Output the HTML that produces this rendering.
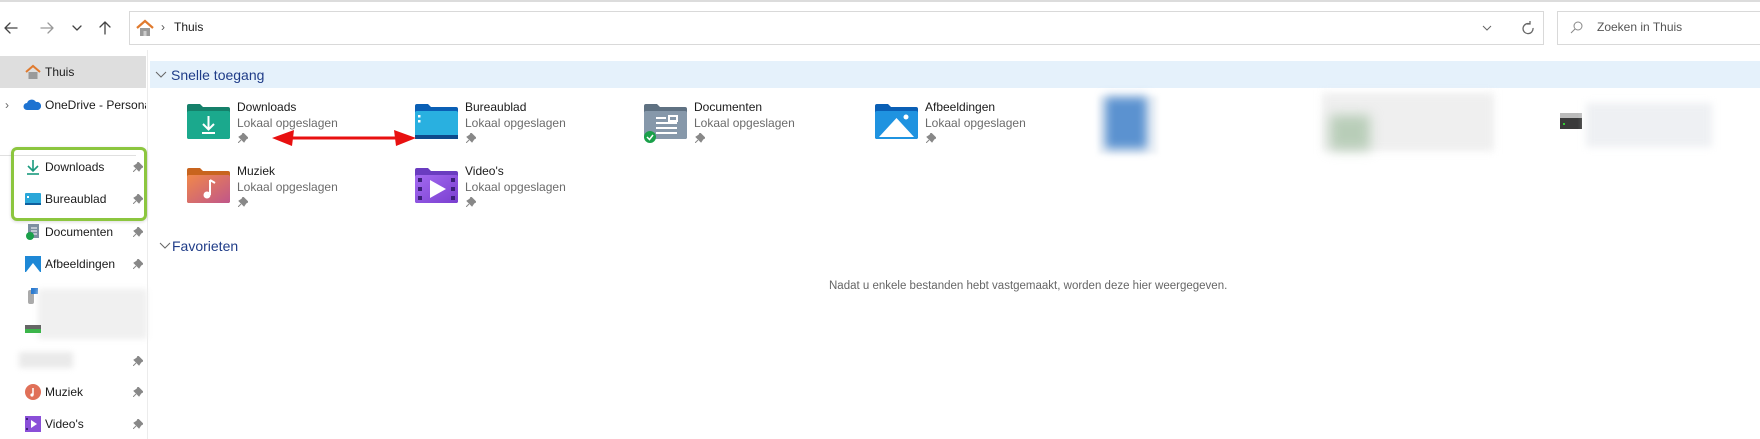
<!DOCTYPE html>
<html><head><meta charset="utf-8"><style>
*{margin:0;padding:0;box-sizing:border-box}
body{width:1760px;height:439px;background:#fff;font-family:"Liberation Sans",sans-serif;font-size:12px;color:#1a1a1a;position:relative;overflow:hidden}
.a{position:absolute}
.t{position:absolute;white-space:nowrap;line-height:14px}
.sub{color:#6b6b6b}
.pin{position:absolute;width:10px;height:10px}
</style></head><body>
<div class="a" style="left:0;top:0;width:1760px;height:2px;background:#dcdcdc"></div>
<!-- nav -->
<svg class="a" style="left:0;top:18px" width="120" height="20">
<g fill="none" stroke-width="1.3" stroke-linecap="round" stroke-linejoin="round">
<path d="M17 10H5M10 5L5 10L10 15" stroke="#444"/>
<path d="M41 10H53M48 5L53 10L48 15" stroke="#999"/>
<path d="M73 8L77 12L81 8" stroke="#444"/>
<path d="M105 16V4M100 9L105 4L110 9" stroke="#444"/>
</g></svg>
<!-- address -->
<div class="a" style="left:129px;top:11px;width:1415px;height:34px;border:1px solid #d9d9d9"></div>
<svg class="a" style="left:135px;top:19px" width="20" height="18"><path d="M2 9L10 2L18 9" fill="none" stroke="#e07a2e" stroke-width="2.2"/><rect x="5" y="9" width="10" height="8" fill="#9a9a9a"/><rect x="8.5" y="12" width="3" height="5" fill="#ccc"/></svg>
<div class="t" style="left:161px;top:20px;color:#555">›</div>
<div class="t" style="left:174px;top:20px">Thuis</div>
<svg class="a" style="left:1480px;top:20px" width="60" height="16"><path d="M3 6L7 10L11 6" fill="none" stroke="#666"/><path d="M50 4A5 5 0 1 0 53 8M50 1V4H47" fill="none" stroke="#666" stroke-width="1.3"/></svg>
<div class="a" style="left:1557px;top:11px;width:210px;height:34px;border:1px solid #d9d9d9"></div>
<svg class="a" style="left:1570px;top:20px" width="14" height="14"><circle cx="8" cy="6" r="4" fill="none" stroke="#888"/><path d="M5 9L1 13" stroke="#888"/></svg>
<div class="t" style="left:1597px;top:20px;color:#555">Zoeken in Thuis</div>
<!-- sidebar -->
<div class="a" style="left:0;top:56px;width:146px;height:32px;background:#dedede"></div>
<div class="a" style="left:147px;top:50px;width:1px;height:389px;background:#ececec"></div>
<svg class="a" style="left:25px;top:64px" width="16" height="16"><path d="M1 8L8 2L15 8" fill="none" stroke="#e07a2e" stroke-width="2"/><rect x="3.5" y="8" width="9" height="7" fill="#9a9a9a"/></svg>
<div class="t" style="left:45px;top:65px">Thuis</div>
<div class="t" style="left:5px;top:98px;color:#666">›</div>
<svg class="a" style="left:23px;top:98px" width="18" height="14"><path d="M4 12A3.5 3.5 0 0 1 4 5A5 5 0 0 1 13 4A4 4 0 0 1 15 12Z" fill="#1e73d1"/></svg>
<div class="t" style="left:45px;top:98px;width:101px;overflow:hidden">OneDrive - Persona</div>
<div class="a" style="left:0;top:155px;width:136px;height:1px;background:#e0e0e0"></div>
<div class="a" style="left:11px;top:147px;width:136px;height:74px;border:3px solid #8cc63f;border-radius:6px;box-shadow:0 1px 3px rgba(0,0,0,.15)"></div>
<!-- sidebar items -->
<svg class="a" style="left:25px;top:159px" width="16" height="16"><path d="M8 1V11M3 7L8 12L13 7" fill="none" stroke="#1a9a7e" stroke-width="1.6"/><path d="M2 15H14" stroke="#1a9a7e" stroke-width="1.6"/></svg>
<div class="t" style="left:45px;top:160px">Downloads</div>
<svg class="a" style="left:25px;top:192px" width="16" height="14"><rect x="0" y="1" width="16" height="12" rx="1" fill="#2aa7d9"/><rect x="0" y="11" width="16" height="2" fill="#0f5f9e"/><rect x="2" y="4" width="2" height="2" fill="#fff"/></svg>
<div class="t" style="left:45px;top:192px">Bureaublad</div>
<svg class="a" style="left:25px;top:223px" width="16" height="18"><rect x="3" y="1" width="11" height="14" fill="#7d8fa0"/><path d="M6 5H12M6 8H12M6 11H12" stroke="#fff"/><circle cx="5" cy="13" r="4" fill="#1aa04a"/></svg>
<div class="t" style="left:45px;top:225px">Documenten</div>
<svg class="a" style="left:25px;top:256px" width="16" height="16"><rect width="16" height="16" fill="#1e88d6"/><path d="M1 16L8 7L15 16Z" fill="#fff"/></svg>
<div class="t" style="left:45px;top:257px">Afbeeldingen</div>
<svg class="a" style="left:25px;top:288px" width="14" height="16"><rect x="3" y="2" width="6" height="14" rx="2" fill="#aaa"/><rect x="6" y="0" width="7" height="6" fill="#2a7ad0"/></svg>
<div class="a" style="left:38px;top:289px;width:109px;height:50px;background:#f0f0f0;filter:blur(3px)"></div>
<svg class="a" style="left:25px;top:325px" width="16" height="10"><rect y="0" width="16" height="4" fill="#666"/><rect y="4" width="16" height="4" fill="#3bb54a"/></svg>
<div class="a" style="left:19px;top:352px;width:54px;height:16px;background:#eaeaea;filter:blur(3px)"></div>
<svg class="a" style="left:25px;top:384px" width="16" height="16"><circle cx="8" cy="8" r="8" fill="#e07058"/><path d="M8 4V11" stroke="#fff" stroke-width="1.5"/><circle cx="7" cy="11" r="1.6" fill="#fff"/></svg>
<div class="t" style="left:45px;top:385px">Muziek</div>
<svg class="a" style="left:25px;top:416px" width="16" height="16"><rect width="16" height="16" fill="#8a4fd8"/><path d="M6 4L12 8L6 12Z" fill="#fff"/><rect x="1" y="2" width="2" height="2" fill="#3b1f7a"/><rect x="1" y="12" width="2" height="2" fill="#3b1f7a"/></svg>
<div class="t" style="left:45px;top:417px">Video's</div>
<!-- pins -->
<svg width="0" height="0" style="position:absolute"><defs><g id="p"><path d="M5 0L10 5L8 6L6 9L1 4L4 2Z M3 7L0 10" fill="#888" stroke="#888" stroke-width="1"/></g></defs></svg>
<svg class="pin" style="left:133px;top:162px"><use href="#p"/></svg>
<svg class="pin" style="left:133px;top:194px"><use href="#p"/></svg>
<svg class="pin" style="left:133px;top:227px"><use href="#p"/></svg>
<svg class="pin" style="left:133px;top:259px"><use href="#p"/></svg>
<svg class="pin" style="left:133px;top:356px"><use href="#p"/></svg>
<svg class="pin" style="left:133px;top:387px"><use href="#p"/></svg>
<svg class="pin" style="left:133px;top:419px"><use href="#p"/></svg>
<!-- content header -->
<div class="a" style="left:150px;top:61px;width:1610px;height:27px;background:#e5f1fb"></div>
<svg class="a" style="left:155px;top:70px" width="12" height="10"><path d="M1 2L6 7L11 2" fill="none" stroke="#666"/></svg>
<div class="t" style="left:171px;top:67px;font-size:14px;line-height:16px;color:#1f3c88">Snelle toegang</div>
<!-- tiles -->
<svg class="a" style="left:187px;top:104px" width="43" height="35"><path d="M0 2Q0 0 2 0H13L16 3H41Q43 3 43 5V33Q43 35 41 35H2Q0 35 0 33Z" fill="#15806a"/><rect x="0" y="7" width="43" height="28" rx="2" fill="#1ba98d"/><path d="M21.5 12V25M16 20L21.5 25.5L27 20M15 29H28" fill="none" stroke="#fff" stroke-width="2"/></svg>
<div class="t" style="left:237px;top:100px">Downloads</div>
<div class="t sub" style="left:237px;top:116px">Lokaal opgeslagen</div>
<svg class="pin" style="left:238px;top:133px"><use href="#p"/></svg>
<svg class="a" style="left:415px;top:104px" width="43" height="35"><path d="M0 2Q0 0 2 0H13L16 3H41Q43 3 43 5V33Q43 35 41 35H2Q0 35 0 33Z" fill="#0a5fb5"/><rect x="0" y="7" width="43" height="28" rx="2" fill="#29b0e0"/><rect x="0" y="31" width="43" height="4" fill="#0d4a8c"/><rect x="3" y="11" width="2.5" height="2.5" fill="#fff"/><rect x="3" y="16" width="2.5" height="2.5" fill="#fff"/></svg>
<div class="t" style="left:465px;top:100px">Bureaublad</div>
<div class="t sub" style="left:465px;top:116px">Lokaal opgeslagen</div>
<svg class="pin" style="left:466px;top:133px"><use href="#p"/></svg>
<svg class="a" style="left:644px;top:104px" width="43" height="40"><path d="M0 2Q0 0 2 0H13L16 3H41Q43 3 43 5V33Q43 35 41 35H2Q0 35 0 33Z" fill="#5f7182"/><rect x="0" y="7" width="43" height="28" rx="2" fill="#8698aa"/><path d="M12 14H22M12 19H33M12 24H33M12 29H33M25 12H33V17H25Z" stroke="#fff" stroke-width="2" fill="none"/><circle cx="6" cy="33" r="6" fill="#1aa04a"/><path d="M3 33L5.5 35.5L9 31" stroke="#fff" stroke-width="1.5" fill="none"/></svg>
<div class="t" style="left:694px;top:100px">Documenten</div>
<div class="t sub" style="left:694px;top:116px">Lokaal opgeslagen</div>
<svg class="pin" style="left:695px;top:133px"><use href="#p"/></svg>
<svg class="a" style="left:875px;top:104px" width="43" height="35"><path d="M0 2Q0 0 2 0H13L16 3H41Q43 3 43 5V33Q43 35 41 35H2Q0 35 0 33Z" fill="#0a5fb5"/><rect x="0" y="7" width="43" height="28" rx="2" fill="#1f93e0"/><path d="M4 33L21.5 14L39 33Z" fill="#fff"/><circle cx="31" cy="13" r="2.5" fill="#fff"/></svg>
<div class="t" style="left:925px;top:100px">Afbeeldingen</div>
<div class="t sub" style="left:925px;top:116px">Lokaal opgeslagen</div>
<svg class="pin" style="left:926px;top:133px"><use href="#p"/></svg>
<div class="a" style="left:1098px;top:96px;width:60px;height:58px;background:#f2f5f8;filter:blur(2px)"></div>
<div class="a" style="left:1105px;top:97px;width:42px;height:52px;background:#5b92d0;filter:blur(5px)"></div>
<div class="a" style="left:1322px;top:93px;width:172px;height:58px;background:#efefef;filter:blur(4px)"></div>
<div class="a" style="left:1330px;top:115px;width:40px;height:35px;background:#b8cdb8;filter:blur(6px)"></div>
<svg class="a" style="left:1560px;top:113px" width="22" height="16"><rect y="4" width="22" height="12" fill="#3a3a3a"/><rect y="0" width="22" height="5" fill="#bbb"/><rect x="3" y="10" width="2" height="2" fill="#3c3"/></svg>
<div class="a" style="left:1586px;top:103px;width:126px;height:44px;background:#eef0f3;filter:blur(4px)"></div>
<!-- row 2 -->
<svg class="a" style="left:187px;top:168px" width="43" height="35"><path d="M0 2Q0 0 2 0H13L16 3H41Q43 3 43 5V33Q43 35 41 35H2Q0 35 0 33Z" fill="#c8641e"/><defs><linearGradient id="m" x1="0" y1="0" x2="1" y2="1"><stop offset="0" stop-color="#f0884a"/><stop offset="1" stop-color="#c0568a"/></linearGradient><linearGradient id="v" x1="0" y1="0" x2="1" y2="1"><stop offset="0" stop-color="#a36af0"/><stop offset="1" stop-color="#7a3fd0"/></linearGradient></defs><rect x="0" y="7" width="43" height="28" rx="2" fill="url(#m)"/><path d="M23 12V27M23 12L28 15" stroke="#fff" stroke-width="2" fill="none"/><circle cx="20" cy="27" r="3.5" fill="#fff"/></svg>
<div class="t" style="left:237px;top:164px">Muziek</div>
<div class="t sub" style="left:237px;top:180px">Lokaal opgeslagen</div>
<svg class="pin" style="left:238px;top:197px"><use href="#p"/></svg>
<svg class="a" style="left:415px;top:168px" width="43" height="35"><path d="M0 2Q0 0 2 0H13L16 3H41Q43 3 43 5V33Q43 35 41 35H2Q0 35 0 33Z" fill="#6a3cc0"/><rect x="0" y="7" width="43" height="28" rx="2" fill="url(#v)"/><path d="M15 12L31 21L15 30Z" fill="#fff"/><g fill="#3b1f7a"><rect x="3" y="10" width="4" height="4"/><rect x="3" y="19" width="4" height="4"/><rect x="3" y="28" width="4" height="4"/><rect x="36" y="10" width="4" height="4"/><rect x="36" y="19" width="4" height="4"/><rect x="36" y="28" width="4" height="4"/></g></svg>
<div class="t" style="left:465px;top:164px">Video's</div>
<div class="t sub" style="left:465px;top:180px">Lokaal opgeslagen</div>
<svg class="pin" style="left:466px;top:197px"><use href="#p"/></svg>
<!-- red arrow -->
<svg class="a" style="left:270px;top:128px" width="150" height="22"><path d="M20 10H128" stroke="#e81010" stroke-width="3"/><path d="M2 10L24 2L22 18Z" fill="#e81010"/><path d="M146 10L124 2L126 18Z" fill="#e81010"/></svg>
<!-- Favorieten -->
<svg class="a" style="left:159px;top:241px" width="12" height="10"><path d="M1 2L6 7L11 2" fill="none" stroke="#666"/></svg>
<div class="t" style="left:172px;top:238px;font-size:14px;line-height:16px;color:#1f3c88">Favorieten</div>
<div class="t" style="left:829px;top:279px;color:#666;font-size:11.5px">Nadat u enkele bestanden hebt vastgemaakt, worden deze hier weergegeven.</div>
</body></html>
